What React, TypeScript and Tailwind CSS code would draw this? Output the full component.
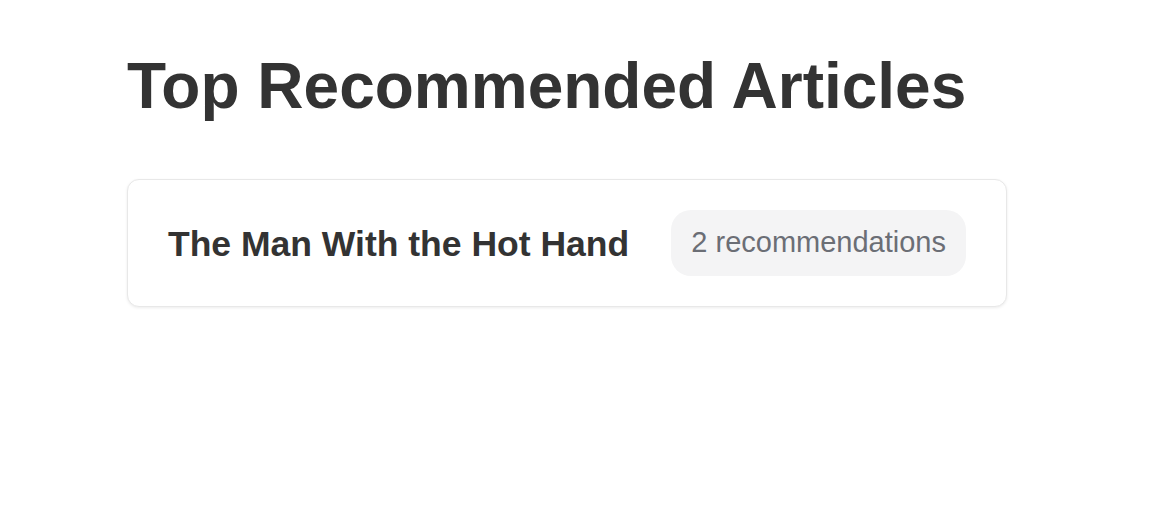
export default function App() {
  return (
    <div className="min-h-screen bg-white pl-[127px] pt-[48px] font-['Liberation_Sans',Arial,sans-serif] text-[#333333]">
      <h1 className="text-[64px] font-bold leading-[76px]">Top Recommended Articles</h1>
      <div className="mt-[55px] w-[880px] rounded-[12px] border border-[#e8e8e8] bg-white px-[40px] py-[30px] shadow-[0_1px_3px_rgba(0,0,0,0.08)]">
        <div className="flex items-center justify-between">
          <h2 className="pt-[4px] text-[35.5px] font-bold leading-none">The Man With the Hot Hand</h2>
          <span className="flex h-[66px] items-center rounded-[20px] bg-[#f4f4f5] px-[20px] text-[29px] text-[#6b6e75]">
            2 recommendations
          </span>
        </div>
      </div>
    </div>
  );
}
